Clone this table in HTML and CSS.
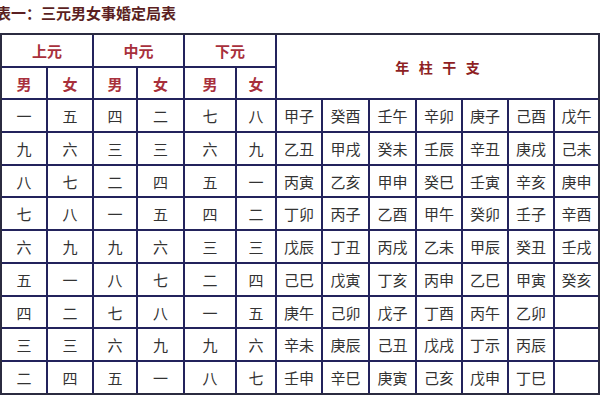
FILE: index.html
```html
<!DOCTYPE html>
<html lang="zh">
<head>
<meta charset="utf-8">
<link rel="stylesheet" href="styles.css">
</head>
<body>
<div class="title">表一：三元男女事婚定局表</div>
<div class="grid">
  <div class="cell hd span2">上元</div>
  <div class="cell hd span2">中元</div>
  <div class="cell hd span2">下元</div>
  <div class="cell hd2 big">年柱干支</div>
  <div class="cell hd">男</div><div class="cell hd">女</div>
  <div class="cell hd">男</div><div class="cell hd">女</div>
  <div class="cell hd">男</div><div class="cell hd">女</div>

  <div class="cell">一</div><div class="cell">五</div><div class="cell">四</div><div class="cell">二</div><div class="cell">七</div><div class="cell">八</div>
  <div class="cell">甲子</div><div class="cell">癸酉</div><div class="cell">壬午</div><div class="cell">辛卯</div><div class="cell">庚子</div><div class="cell">己酉</div><div class="cell">戊午</div>

  <div class="cell">九</div><div class="cell">六</div><div class="cell">三</div><div class="cell">三</div><div class="cell">六</div><div class="cell">九</div>
  <div class="cell">乙丑</div><div class="cell">甲戌</div><div class="cell">癸未</div><div class="cell">壬辰</div><div class="cell">辛丑</div><div class="cell">庚戌</div><div class="cell">己未</div>

  <div class="cell">八</div><div class="cell">七</div><div class="cell">二</div><div class="cell">四</div><div class="cell">五</div><div class="cell">一</div>
  <div class="cell">丙寅</div><div class="cell">乙亥</div><div class="cell">甲申</div><div class="cell">癸巳</div><div class="cell">壬寅</div><div class="cell">辛亥</div><div class="cell">庚申</div>

  <div class="cell">七</div><div class="cell">八</div><div class="cell">一</div><div class="cell">五</div><div class="cell">四</div><div class="cell">二</div>
  <div class="cell">丁卯</div><div class="cell">丙子</div><div class="cell">乙酉</div><div class="cell">甲午</div><div class="cell">癸卯</div><div class="cell">壬子</div><div class="cell">辛酉</div>

  <div class="cell">六</div><div class="cell">九</div><div class="cell">九</div><div class="cell">六</div><div class="cell">三</div><div class="cell">三</div>
  <div class="cell">戊辰</div><div class="cell">丁丑</div><div class="cell">丙戌</div><div class="cell">乙未</div><div class="cell">甲辰</div><div class="cell">癸丑</div><div class="cell">壬戌</div>

  <div class="cell">五</div><div class="cell">一</div><div class="cell">八</div><div class="cell">七</div><div class="cell">二</div><div class="cell">四</div>
  <div class="cell">己巳</div><div class="cell">戊寅</div><div class="cell">丁亥</div><div class="cell">丙申</div><div class="cell">乙巳</div><div class="cell">甲寅</div><div class="cell">癸亥</div>

  <div class="cell">四</div><div class="cell">二</div><div class="cell">七</div><div class="cell">八</div><div class="cell">一</div><div class="cell">五</div>
  <div class="cell">庚午</div><div class="cell">己卯</div><div class="cell">戊子</div><div class="cell">丁酉</div><div class="cell">丙午</div><div class="cell">乙卯</div><div class="cell"></div>

  <div class="cell">三</div><div class="cell">三</div><div class="cell">六</div><div class="cell">九</div><div class="cell">九</div><div class="cell">六</div>
  <div class="cell">辛未</div><div class="cell">庚辰</div><div class="cell">己丑</div><div class="cell">戊戌</div><div class="cell">丁示</div><div class="cell">丙辰</div><div class="cell"></div>

  <div class="cell">二</div><div class="cell">四</div><div class="cell">五</div><div class="cell">一</div><div class="cell">八</div><div class="cell">七</div>
  <div class="cell">壬申</div><div class="cell">辛巳</div><div class="cell">庚寅</div><div class="cell">己亥</div><div class="cell">戊申</div><div class="cell">丁巳</div><div class="cell"></div>
</div>
</body>
</html>
```
FILE: styles.css
```css
html, body {
  margin: 0;
  padding: 0;
  background: #ffffff;
}
body {
  font-family: "Noto Sans CJK SC", "Noto Sans", sans-serif;
  width: 600px;
  height: 400px;
  overflow: hidden;
}
.title {
  height: 33px;
  line-height: 25px;
  margin-left: -4px;
  font-size: 15px;
  font-weight: 700;
  color: #5b1f22;
  white-space: nowrap;
}
.grid {
  display: grid;
  grid-template-columns: 44px 44px 42px 45px 50px 38px 44px 45px 45px 44px 44px 44px 43px;
  grid-template-rows: 31px 30px 31px 31px 30px 31px 31px 31px 30px 31px 31px;
  gap: 2px;
  background: #23235c;
  border: 2px solid #2b2b40;
  width: 596px;
}
.cell {
  background: #ffffff;
  display: flex;
  align-items: center;
  justify-content: center;
  font-size: 15px;
  color: #333333;
  line-height: 1;
}
.hd {
  color: #a8303c;
  font-weight: 700;
  font-size: 15px;
}
.span2 {
  grid-column: span 2;
}
.hd2 {
  grid-column: 7 / span 7;
  grid-row: 1 / span 2;
  color: #8e1f24;
  font-weight: 700;
}
.big {
  font-size: 14px;
  letter-spacing: 9.5px;
  padding-left: 9.5px;
}
```
